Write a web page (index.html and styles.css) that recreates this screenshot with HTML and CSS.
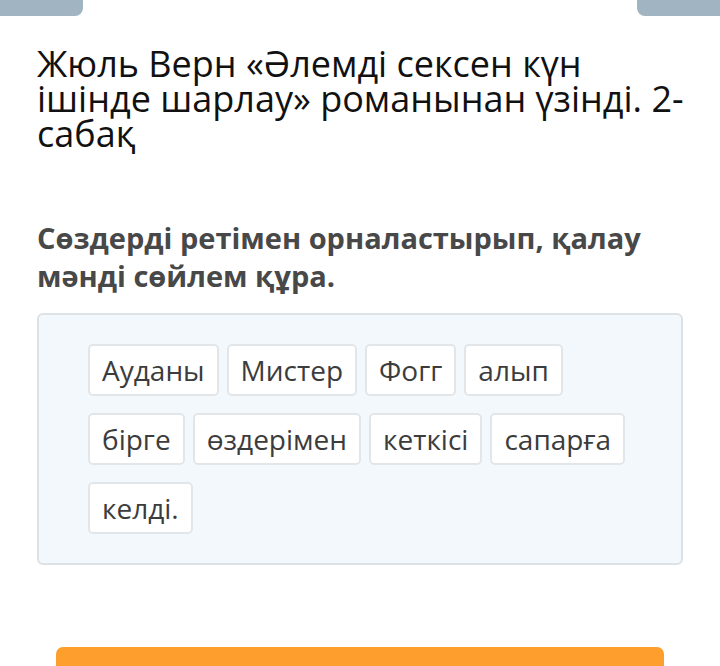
FILE: index.html
```html
<!DOCTYPE html>
<html lang="kk">
<head>
<meta charset="utf-8">
<link rel="stylesheet" href="styles.css">
</head>
<body>
<div class="topbar">
  <div class="tab"></div>
  <div class="tab"></div>
</div>
<main class="content">
  <h1 class="title">Жюль Верн «Әлемді сексен күн ішінде шарлау» романынан үзінді. 2-<wbr>сабақ</h1>
  <h2 class="task">Сөздерді ретімен орналастырып, қалау мәнді сөйлем құра.</h2>
  <div class="board">
    <span class="chip">Ауданы</span>
    <span class="chip">Мистер</span>
    <span class="chip">Фогг</span>
    <span class="chip">алып</span>
    <span class="chip">бірге</span>
    <span class="chip">өздерімен</span>
    <span class="chip">кеткісі</span>
    <span class="chip">сапарға</span>
    <span class="chip">келді.</span>
  </div>
</main>
<div class="footer">
  <div class="btn"></div>
</div>
</body>
</html>
```
FILE: styles.css
```css
* { box-sizing: border-box; }
html, body { margin: 0; padding: 0; background: #fff; }
body {
  width: 720px;
  height: 666px;
  overflow: hidden;
  font-family: "Open Sans", "Noto Sans", sans-serif;
}
.topbar {
  display: flex;
  justify-content: space-between;
  height: 16px;
}
.tab {
  width: 83px;
  height: 16px;
  background: #a0b4c2;
}
.tab:first-child { border-radius: 0 0 8px 0; }
.tab:last-child { border-radius: 0 0 0 8px; }
.content {
  padding: 0 37px;
}
.title {
  margin: 30px -12px 0 0;
  font-weight: 400;
  font-size: 36px;
  line-height: 35px;
  color: #111;
}
.task {
  margin: 68px 0 0;
  font-weight: 700;
  font-size: 29px;
  line-height: 38px;
  color: #484848;
}
.board {
  margin-top: 18px;
  height: 252px;
  background: #f3f8fc;
  border: 2px solid #dde2e6;
  border-radius: 6px;
  padding: 29px 49px;
  display: flex;
  flex-wrap: wrap;
  align-content: flex-start;
  gap: 17px 8px;
}
.chip {
  display: block;
  height: 52px;
  padding: 0 12px;
  background: #fff;
  border: 2px solid #e3e6e9;
  border-radius: 5px;
  font-size: 28px;
  line-height: 48px;
  color: #3c3c3c;
}
.footer {
  padding: 82px 56px 0;
}
.btn {
  height: 40px;
  background: #fd9e2d;
  border-radius: 7px 7px 0 0;
}
```
